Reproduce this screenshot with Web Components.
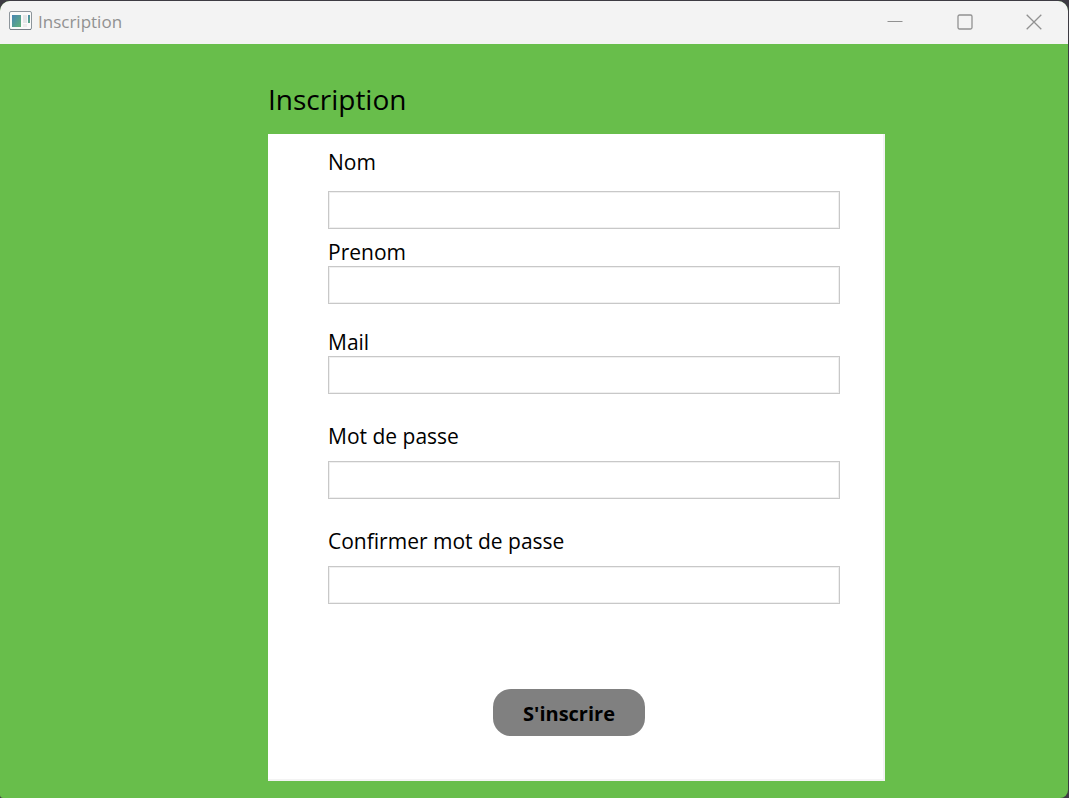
<!DOCTYPE html>
<html lang="fr">
<head>
<meta charset="utf-8">
<title>Inscription</title>
<style>
html, body { margin: 0; min-height: 100%; }
html { background: #3d3b43; }
body { font-family: "Open Sans", "Segoe UI", sans-serif; color: #000; }
</style>
</head>
<body>
<app-window heading="Inscription">
  <signup-form></signup-form>
</app-window>
<script>
class AppWindow extends HTMLElement {
  constructor() {
    super();
    this.attachShadow({ mode: "open" }).innerHTML = `
<style>
:host { display: block; box-sizing: border-box; min-height: 100vh; padding: 1px 1px 0 0; }
.frame { display: flex; flex-direction: column; min-height: calc(100vh - 1px); border-radius: 10px 10px 8px 3px; overflow: hidden; background: #68be4b; }
header { display: flex; align-items: center; box-sizing: border-box; height: 43px; padding-bottom: 2px; background: #f3f3f3; color: #919191; }
.icon { display: block; margin: 0 6px 2px 9px; }
.name { flex: 1; font-size: 17px; line-height: 24px; }
button { display: grid; place-items: center; width: 70px; height: 41px; padding: 0; border: 0; background: none; color: #919191; }
button:last-of-type { width: 68px; }
button svg { display: block; }
main { flex: 1; }
</style>
<div class="frame">
  <header>
    <svg class="icon" width="23" height="19" viewBox="0 0 23 19" aria-hidden="true">
      <defs><linearGradient id="g" x1="0" y1="0" x2="1" y2="1"><stop offset="0" stop-color="#4684b4"/><stop offset="1" stop-color="#62b278"/></linearGradient></defs>
      <rect x=".5" y=".5" width="22" height="18" rx="1.5" fill="#fafafa" stroke="#8d959b"/>
      <path d="M1 18.500h21" stroke="#767f86"/>
      <rect x="3" y="4" width="9" height="12" fill="url(#g)"/>
      <rect x="14" y="4" width="4" height="8" fill="#e4e6e7"/>
      <rect x="14" y="13" width="4" height="3" fill="#ececec"/>
      <rect x="19" y="4" width="2" height="8" fill="url(#g)"/>
    </svg>
    <span class="name"></span>
    <button aria-label="Réduire"><svg width="16" height="16" fill="none" stroke="currentColor"><path d="M.5 7.500h15"/></svg></button>
    <button aria-label="Agrandir"><svg width="16" height="16" fill="none" stroke="currentColor" stroke-width="1.300"><rect x="1" y="1" width="14" height="14" rx="1.500"/></svg></button>
    <button aria-label="Fermer"><svg width="16" height="16" fill="none" stroke="currentColor" stroke-width="1.300"><path d="M.7.700l14.600 14.600M15.300.700L.7 15.300"/></svg></button>
  </header>
  <main><slot></slot></main>
</div>`;
    this.shadowRoot.querySelector(".name").textContent = this.getAttribute("heading");
  }
}
class FormField extends HTMLElement {
  constructor() {
    super();
    this.attachShadow({ mode: "open" }).innerHTML = `
<style>
:host { display: flex; flex-direction: column; gap: 11px; }
:host([spacing="wide"]) { gap: 15px; }
:host([spacing="none"]) { gap: 0; }
label { font-size: 21px; line-height: 28px; }
input { box-sizing: border-box; width: 100%; height: 38px; padding: 0 8px; margin: 0; border: 1px solid #c8c8c8; border-radius: 0; background: #fff; font: inherit; font-size: 20px; box-shadow: inset 0 0 0 1px #f0f0f0; }
</style>
<label for="field"></label>
<input id="field">`;
    this.shadowRoot.querySelector("label").textContent = this.getAttribute("label");
    this.shadowRoot.querySelector("input").type = this.getAttribute("type") || "text";
  }
}
class SignupForm extends HTMLElement {
  constructor() {
    super();
    this.attachShadow({ mode: "open" }).innerHTML = `
<style>
:host { display: grid; grid-template-columns: 268fr 617fr 183fr; padding: 35px 0 17px; }
section { grid-column: 2; min-width: 0; }
h1 { margin: 0 0 15px; font-size: 28px; line-height: 40px; font-weight: 400; }
form { display: flex; flex-direction: column; padding: 14px 45px 45px 60px; background: #fff; box-shadow: inset -1px -1px 0 1px #f3f3f3; }
.prenom { margin-top: 9px; }
.mail { margin-top: 24px; }
.secret { margin-top: 28px; }
.actions { display: flex; justify-content: center; margin-top: 85px; padding-right: 30px; }
button { width: 152px; height: 47px; padding: 2px 0 0; border: 0; border-radius: 18px; background: #808080; color: #000; font: inherit; font-size: 20px; font-weight: 700; }
</style>
<section>
  <h1>Inscription</h1>
  <form>
    <form-field label="Nom" spacing="wide"></form-field>
    <form-field class="prenom" label="Prenom" spacing="none"></form-field>
    <form-field class="mail" label="Mail" type="email" spacing="none"></form-field>
    <form-field class="secret" label="Mot de passe" type="password"></form-field>
    <form-field class="secret" label="Confirmer mot de passe" type="password"></form-field>
    <div class="actions"><button type="submit">S'inscrire</button></div>
  </form>
</section>`;
  }
}
customElements.define("app-window", AppWindow);
customElements.define("form-field", FormField);
customElements.define("signup-form", SignupForm);
</script>
</body>
</html>
